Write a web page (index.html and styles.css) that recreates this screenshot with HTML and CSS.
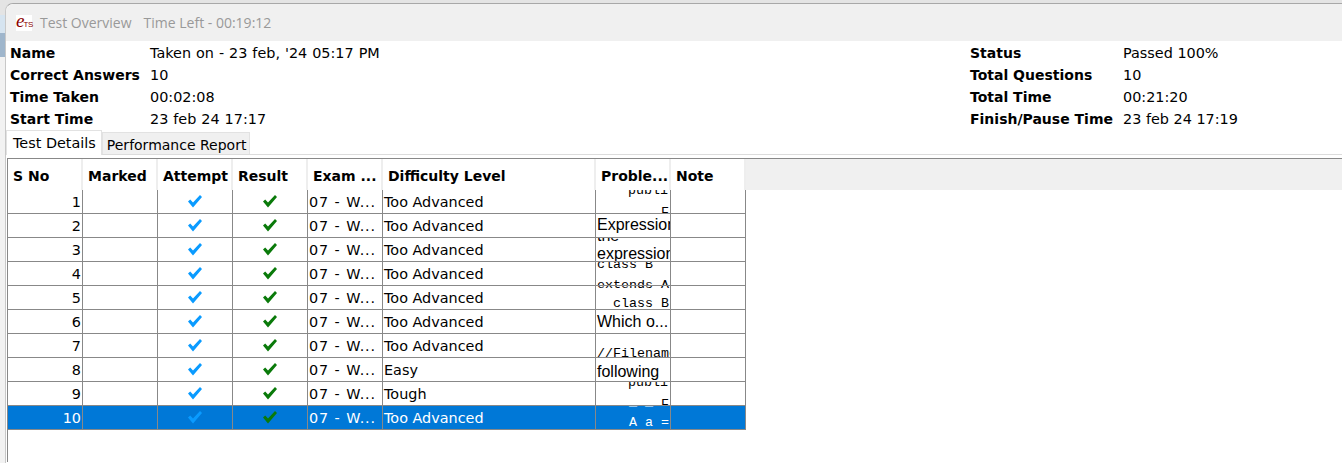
FILE: index.html
```html
<!DOCTYPE html>
<html>
<head>
<meta charset="utf-8">
<title>Test Overview</title>
<link rel="stylesheet" href="styles.css">
</head>
<body>
<svg width="0" height="0" class="defs">
  <symbol id="tick" viewBox="0 0 14 13">
    <path d="M0 6.5 L2.2 4.6 L5 7.4 L12 0 L14 2 L5 12.5 Z"/>
  </symbol>
</svg>
<div class="window">
  <div class="titlebar">
    <span class="logo"><i>e</i><b>TS</b></span>
    <span class="title">Test Overview</span>
    <span class="title">Time Left - 00:19:12</span>
  </div>

  <div class="summary">
    <div class="info info-left">
      <b>Name</b><span>Taken on - 23 feb, '24 05:17 PM</span>
      <b>Correct Answers</b><span>10</span>
      <b>Time Taken</b><span>00:02:08</span>
      <b>Start Time</b><span>23 feb 24 17:17</span>
    </div>
    <div class="info info-right">
      <b>Status</b><span>Passed 100%</span>
      <b>Total Questions</b><span>10</span>
      <b>Total Time</b><span>00:21:20</span>
      <b>Finish/Pause Time</b><span>23 feb 24 17:19</span>
    </div>
  </div>

  <div class="tabs">
    <div class="tab tab-on">Test Details</div>
    <div class="tab">Performance Report</div>
  </div>

  <div class="pane">
    <div class="head">
      <div class="hcell">S No</div>
      <div class="hcell">Marked</div>
      <div class="hcell">Attempt</div>
      <div class="hcell">Result</div>
      <div class="hcell">Exam ...</div>
      <div class="hcell wide">Difficulty Level</div>
      <div class="hcell">Proble...</div>
      <div class="hcell">Note</div>
      <div class="hfill"></div>
    </div>
    <div class="rows">
      <div class="row">
        <div class="cell num">1</div><div class="cell"></div>
        <div class="cell icon"><svg class="tick-blue"><use href="#tick"/></svg></div>
        <div class="cell icon"><svg class="tick-green"><use href="#tick"/></svg></div>
        <div class="cell text exam">07 - W...</div><div class="cell text wide">Too Advanced</div>
        <div class="cell prob"><span class="mono m1">publi</span><span class="mono m2">F</span></div><div class="cell"></div>
      </div>
      <div class="row">
        <div class="cell num">2</div><div class="cell"></div>
        <div class="cell icon"><svg class="tick-blue"><use href="#tick"/></svg></div>
        <div class="cell icon"><svg class="tick-green"><use href="#tick"/></svg></div>
        <div class="cell text exam">07 - W...</div><div class="cell text wide">Too Advanced</div>
        <div class="cell prob"><span class="sans s-expr">Expression</span></div><div class="cell"></div>
      </div>
      <div class="row">
        <div class="cell num">3</div><div class="cell"></div>
        <div class="cell icon"><svg class="tick-blue"><use href="#tick"/></svg></div>
        <div class="cell icon"><svg class="tick-green"><use href="#tick"/></svg></div>
        <div class="cell text exam">07 - W...</div><div class="cell text wide">Too Advanced</div>
        <div class="cell prob"><span class="sans s-top">the</span><span class="sans s-low">expression</span></div><div class="cell"></div>
      </div>
      <div class="row">
        <div class="cell num">4</div><div class="cell"></div>
        <div class="cell icon"><svg class="tick-blue"><use href="#tick"/></svg></div>
        <div class="cell icon"><svg class="tick-green"><use href="#tick"/></svg></div>
        <div class="cell text exam">07 - W...</div><div class="cell text wide">Too Advanced</div>
        <div class="cell prob"><span class="mono m-class">class B</span><span class="mono m-ext">extends A</span></div><div class="cell"></div>
      </div>
      <div class="row">
        <div class="cell num">5</div><div class="cell"></div>
        <div class="cell icon"><svg class="tick-blue"><use href="#tick"/></svg></div>
        <div class="cell icon"><svg class="tick-green"><use href="#tick"/></svg></div>
        <div class="cell text exam">07 - W...</div><div class="cell text wide">Too Advanced</div>
        <div class="cell prob"><span class="mono m-ext2">extends A</span><span class="mono m-class2">class B</span></div><div class="cell"></div>
      </div>
      <div class="row">
        <div class="cell num">6</div><div class="cell"></div>
        <div class="cell icon"><svg class="tick-blue"><use href="#tick"/></svg></div>
        <div class="cell icon"><svg class="tick-green"><use href="#tick"/></svg></div>
        <div class="cell text exam">07 - W...</div><div class="cell text wide">Too Advanced</div>
        <div class="cell prob"><span class="sans s-which">Which o...</span></div><div class="cell"></div>
      </div>
      <div class="row">
        <div class="cell num">7</div><div class="cell"></div>
        <div class="cell icon"><svg class="tick-blue"><use href="#tick"/></svg></div>
        <div class="cell icon"><svg class="tick-green"><use href="#tick"/></svg></div>
        <div class="cell text exam">07 - W...</div><div class="cell text wide">Too Advanced</div>
        <div class="cell prob"><span class="mono m-file">//Filename</span></div><div class="cell"></div>
      </div>
      <div class="row">
        <div class="cell num">8</div><div class="cell"></div>
        <div class="cell icon"><svg class="tick-blue"><use href="#tick"/></svg></div>
        <div class="cell icon"><svg class="tick-green"><use href="#tick"/></svg></div>
        <div class="cell text exam">07 - W...</div><div class="cell text wide">Easy</div>
        <div class="cell prob"><span class="sans s-follow">following</span></div><div class="cell"></div>
      </div>
      <div class="row">
        <div class="cell num">9</div><div class="cell"></div>
        <div class="cell icon"><svg class="tick-blue"><use href="#tick"/></svg></div>
        <div class="cell icon"><svg class="tick-green"><use href="#tick"/></svg></div>
        <div class="cell text exam">07 - W...</div><div class="cell text wide">Tough</div>
        <div class="cell prob"><span class="mono m1">publi</span><span class="mono m2">F</span></div><div class="cell"></div>
      </div>
      <div class="row row-on">
        <div class="cell num">10</div><div class="cell"></div>
        <div class="cell icon"><svg class="tick-blue"><use href="#tick"/></svg></div>
        <div class="cell icon"><svg class="tick-green"><use href="#tick"/></svg></div>
        <div class="cell text exam">07 - W...</div><div class="cell text wide">Too Advanced</div>
        <div class="cell prob"><span class="mono m-bar">_ _</span><span class="mono m-a">A a =</span></div><div class="cell"></div>
      </div>
    </div>
  </div>
</div>
</body>
</html>
```

FILE: styles.css
```css
html, body { height: 100%; }

body {
  margin: 0;
  overflow: hidden;
  background: linear-gradient(#e4e4e4 0 15px, #d6e4f0 15px 33px, #9fb6cc 33px 57px, #f2f2f2 57px);
  font-family: "DejaVu Sans", sans-serif;
  font-size: 14.4px;
  color: #000;
}

.defs { display: block; height: 0; }

.window {
  height: 460px;
  margin: 3px 0 0 5px;
  background: #fff;
  border-top: 1px solid #a8a8a8;
  border-left: 1px solid #c8c8c8;
  border-top-left-radius: 8px;
}

.titlebar {
  height: 37px;
  display: flex;
  align-items: center;
  gap: 12px;
  padding-left: 10px;
  background: #f0f0f0;
  border-top-left-radius: 8px;
  color: #999;
  font-family: "Open Sans", sans-serif;
  font-size: 14px;
}

.logo {
  width: 16px;
  height: 16px;
  margin-right: -4px;
  display: flex;
  align-items: center;
  background: #fff;
  color: #8b0000;
  font-family: "Liberation Serif", serif;
}
.logo i { font-size: 19px; line-height: 16px; margin-top: -3px; }
.logo b { font-size: 8px; font-weight: normal; margin: 3px 0 0 -1px; letter-spacing: -0.3px; font-family: "Liberation Sans", sans-serif; }

.summary {
  display: flex;
  justify-content: space-between;
  padding: 1px 0 0 4px;
}

.info {
  display: grid;
  grid-auto-rows: 22px;
  align-items: center;
}
.info-left { grid-template-columns: 140px auto; }
.info-right { grid-template-columns: 153px 219px; }
.info b { font-size: 14px; font-weight: bold; }
.info-left span { word-spacing: 0.4px; }

.tabs {
  display: flex;
  align-items: flex-end;
  height: 24px;
  border-bottom: 1px solid #dcdcdc;
}

.tab {
  height: 21px;
  line-height: 24px;
  padding: 0 3px 0 4px;
  background: #f0f0f0;
  border: 1px solid #e2e2e2;
  border-bottom: none;
  font-size: 14px;
}
.tab-on {
  height: 24px;
  line-height: 25px;
  padding: 0 5px 0 6px;
  background: #fff;
  margin-bottom: -1px;
  font-size: 14.4px;
}

.pane {
  margin: 3px 0 0 1px;
  height: 304px;
  border-left: 1px solid #888;
}

.head {
  display: flex;
  height: 31px;
  background: #f0f0f0;
  border-top: 1px solid #888;
}

.hcell {
  width: 75px;
  padding-left: 5px;
  line-height: 35px;
  background: #fff;
  font-size: 14px;
  font-weight: bold;
  white-space: nowrap;
  border-right: 2px solid #eee;
  box-sizing: border-box;
}
.hcell.wide { width: 213px; }
.hfill { flex: 1; }

.rows { width: 738px; }

.row {
  display: flex;
  height: 24px;
  box-sizing: border-box;
  border-bottom: 1px solid #888;
}

.cell {
  position: relative;
  width: 75px;
  box-sizing: border-box;
  border-right: 1px solid #888;
  overflow: hidden;
  white-space: nowrap;
  line-height: 24px;
}
.cell.wide { width: 213px; }

.num { text-align: right; padding-right: 1px; }
.text { padding-left: 1px; }
.exam { letter-spacing: 0.9px; }
.icon { display: flex; align-items: center; justify-content: center; padding-right: 1px; }
.icon svg { width: 14px; height: 13px; }

.tick-blue { fill: #0a9bff; }
.tick-green { fill: #0a7a0a; }

.row-on { background: #0078d7; color: #fff; }

/* clipped html content of the problem column */
.prob span { position: absolute; white-space: pre; }
.sans { font-family: "Liberation Sans", sans-serif; font-size: 16px; line-height: 24px; left: 1px; }
.mono { font-family: "Liberation Mono", monospace; font-size: 13.33px; line-height: 14px; }

.s-expr { top: -1px; }
.s-which { top: 0; }
.s-follow { top: 2px; }
.s-top { top: -14px; }
.s-low { top: 4px; }

.m1 { left: 32px; top: -6px; }
.m2 { left: 65px; top: 16px; }
.m-class { left: 1px; top: -4px; }
.m-ext { left: 1px; top: 17px; }
.m-ext2 { left: 1px; top: -8px; }
.m-class2 { left: 17px; top: 11px; }
.m-file { left: 1px; top: 13px; }
.m-bar { left: 33px; top: -11px; }
.m-a { left: 33px; top: 10px; }
```
